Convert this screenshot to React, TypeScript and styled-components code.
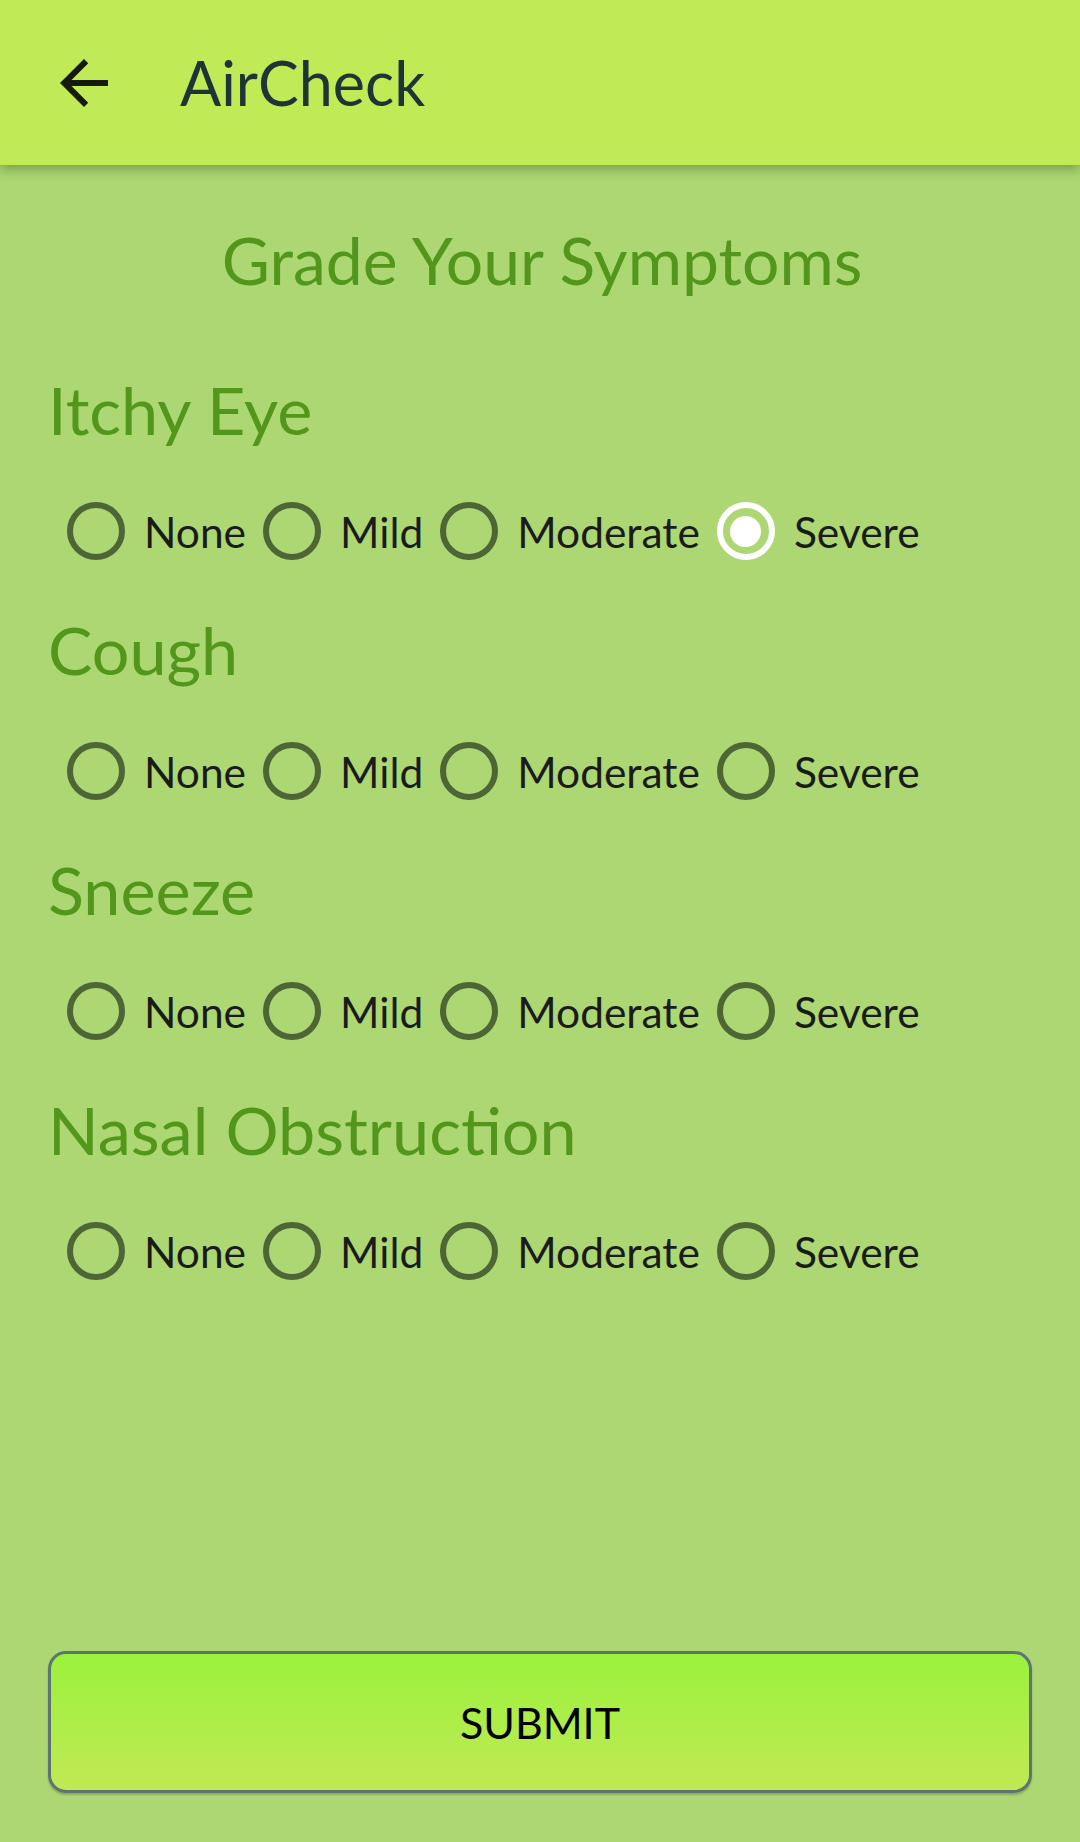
import React, { FC, useState } from "react";
import styled, { createGlobalStyle } from "styled-components";

const levels = ["None", "Mild", "Moderate", "Severe"];
const symptoms = ["Itchy Eye", "Cough", "Sneeze", "Nasal Obstruction"];

const GlobalStyle = createGlobalStyle`
  * {
    box-sizing: border-box;
  }
  body {
    margin: 0;
    background: #acd773;
    font-family: "Lato", "Noto Sans", sans-serif;
  }
`;

const App: FC = () => {
  const [grades, setGrades] = useState<Record<string, string>>({
    "Itchy Eye": "Severe",
  });

  return (
    <Page>
      <GlobalStyle />
      <AppBar>
        <BackButton aria-label="Back">
          <svg width="72" height="72" viewBox="0 0 24 24">
            <path
              d="M20 11H7.83l5.59-5.59L12 4l-8 8 8 8 1.41-1.41L7.83 13H20v-2z"
              fill="#151b0b"
            />
          </svg>
        </BackButton>
        <AppTitle>AirCheck</AppTitle>
      </AppBar>

      <Content>
        <PageTitle>Grade Your Symptoms</PageTitle>
        {symptoms.map((symptom) => (
          <Section key={symptom}>
            <SymptomName>{symptom}</SymptomName>
            <RadioRow>
              {levels.map((level) => {
                const checked = grades[symptom] === level;
                return (
                  <Option key={level}>
                    <HiddenInput
                      type="radio"
                      name={symptom}
                      checked={checked}
                      onChange={() =>
                        setGrades({ ...grades, [symptom]: level })
                      }
                    />
                    <Circle $checked={checked} />
                    <OptionLabel>{level}</OptionLabel>
                  </Option>
                );
              })}
            </RadioRow>
          </Section>
        ))}
      </Content>

      <SubmitButton>SUBMIT</SubmitButton>
    </Page>
  );
};

export default App;

const Page = styled.div`
  min-height: 100vh;
  display: flex;
  flex-direction: column;
`;

const AppBar = styled.header`
  position: relative;
  z-index: 1;
  height: 165px;
  display: flex;
  align-items: center;
  padding-left: 48px;
  background: #c0ea56;
  box-shadow: 0 5px 10px rgba(40, 70, 10, 0.35);
`;

const BackButton = styled.button`
  display: flex;
  padding: 0;
  border: none;
  background: none;
  cursor: pointer;
`;

const AppTitle = styled.h1`
  margin: 0 0 0 60px;
  font-size: 61px;
  font-weight: 400;
  color: #1f3434;
`;

const Content = styled.main`
  flex: 1;
  display: flex;
  flex-direction: column;
  gap: 39px;
  padding: 55px 44px 0 48px;
`;

const PageTitle = styled.h2`
  margin: 0 0 32px;
  font-size: 66px;
  font-weight: 400;
  line-height: 79px;
  text-align: center;
  color: #52961b;
`;

const Section = styled.section`
  display: flex;
  flex-direction: column;
  gap: 42px;
`;

const SymptomName = styled.h3`
  margin: 0;
  font-size: 66.5px;
  font-weight: 400;
  line-height: 79px;
  color: #52961b;
`;

const RadioRow = styled.div`
  height: 80px;
  display: flex;
  align-items: center;
  gap: 17px;
  padding-left: 19px;
`;

const Option = styled.label`
  display: flex;
  align-items: center;
  gap: 19px;
  cursor: pointer;
`;

const HiddenInput = styled.input`
  position: absolute;
  opacity: 0;
  width: 0;
  height: 0;
  margin: 0;
`;

const Circle = styled.span<{ $checked: boolean }>`
  width: 58px;
  height: 58px;
  display: flex;
  align-items: center;
  justify-content: center;
  border-radius: 50%;
  border: 6px solid ${(p) => (p.$checked ? "#ffffff" : "#4e6535")};

  &::after {
    content: "";
    width: 31px;
    height: 31px;
    border-radius: 50%;
    background: #ffffff;
    display: ${(p) => (p.$checked ? "block" : "none")};
  }
`;

const OptionLabel = styled.span`
  font-size: 42.5px;
  color: #1b1b1b;
`;

const SubmitButton = styled.button`
  height: 142px;
  margin: 0 48px 49px 48px;
  border: 3px solid #5e7470;
  border-radius: 18px;
  background: linear-gradient(to bottom, #9af23c, #c1e955);
  box-shadow: 0 2px 2px rgba(0, 0, 0, 0.2);
  font-family: "Lato", "Noto Sans", sans-serif;
  font-size: 43px;
  color: #000000;
  cursor: pointer;
`;
